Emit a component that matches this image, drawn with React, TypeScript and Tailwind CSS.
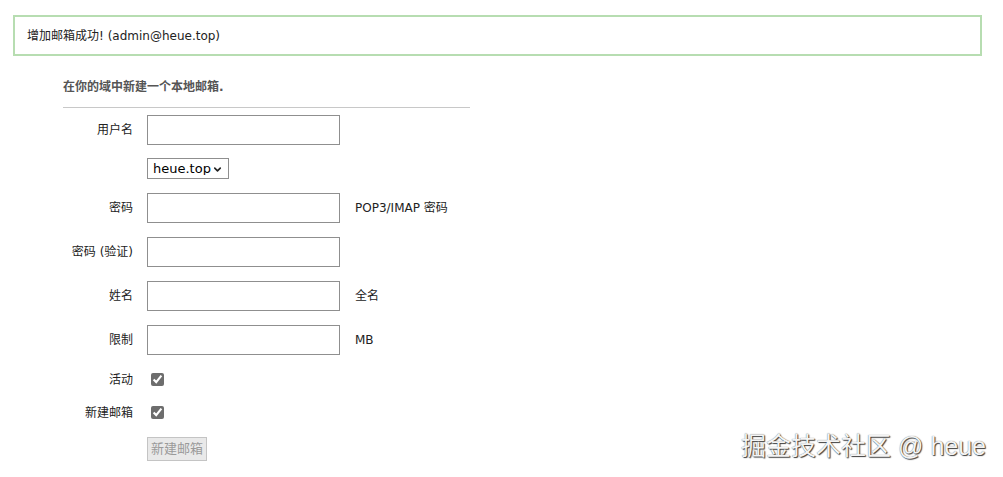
import { ChevronDown } from "lucide-react";

// ─── Form rows ────────────────────────────────────────────────────────────────
type Row = {
  label: string;
  kind: "text" | "select" | "check" | "submit";
  hint?: string;
  mt: string;
};

const ROWS: Row[] = [
  { label: "用户名", kind: "text", mt: "mt-[7px]" },
  { label: "", kind: "select", mt: "mt-[13px]" },
  { label: "密码", kind: "text", hint: "POP3/IMAP 密码", mt: "mt-[14px]" },
  { label: "密码 (验证)", kind: "text", mt: "mt-[14px]" },
  { label: "姓名", kind: "text", hint: "全名", mt: "mt-[14px]" },
  { label: "限制", kind: "text", hint: "MB", mt: "mt-[14px]" },
  { label: "活动", kind: "check", mt: "mt-[18px]" },
  { label: "新建邮箱", kind: "check", mt: "mt-[20px]" },
  { label: "", kind: "submit", mt: "mt-[18px]" },
];

const FONT = "font-['DejaVu_Sans','Noto_Sans_CJK_SC',sans-serif]";

function Control({ row }: { row: Row }) {
  if (row.kind === "text") {
    return (
      <input
        type="text"
        className="h-[30px] w-[193px] border border-[#8f8f8f] bg-white px-1 text-[13px] outline-none"
      />
    );
  }
  if (row.kind === "select") {
    return (
      <div className="relative flex h-[21px] w-[82px] items-center border border-[#8f8f8f] bg-white">
        <select className="h-full w-full appearance-none bg-transparent pl-[5px] text-[13px] leading-none text-black outline-none">
          <option>heue.top</option>
        </select>
        <ChevronDown
          size={11}
          strokeWidth={3.5}
          className="pointer-events-none absolute right-[5px] top-[5px] text-[#222]"
        />
      </div>
    );
  }
  if (row.kind === "check") {
    return (
      <input
        type="checkbox"
        defaultChecked
        className="ml-[4px] h-[13px] w-[13px] accent-[#6d6d6d]"
      />
    );
  }
  return (
    <button
      disabled
      className="h-[24px] w-[60px] border border-[#c4c4c4] bg-[#e9e9e9] text-[13px] text-[#9a9a9a]"
    >
      新建邮箱
    </button>
  );
}

export default function App() {
  return (
    <div className={`relative h-[477px] w-full overflow-hidden bg-white text-[12px] text-[#222] ${FONT}`}>

      {/* ─── Success alert ─── */}
      <div className="ml-[13px] mr-[21px] mt-[15px] flex h-[41px] items-center border-2 border-[#b7ddb1] pl-[12px]">
        增加邮箱成功! (admin@heue.top)
      </div>

      {/* ─── Form ─── */}
      <div className="ml-[63px] mt-[22px] w-[407px]">
        <p className="font-bold text-[#555]">在你的域中新建一个本地邮箱.</p>
        <div className="mt-[11px] h-px bg-[#c8c8c8]" />

        {ROWS.map((row, i) => (
          <div
            key={i}
            className={`flex items-center ${row.mt} ${row.kind === "check" ? "h-[13px]" : ""}`}
          >
            <div className="w-[70px] shrink-0 text-right text-[#222]">{row.label}</div>
            <div className="ml-[14px] flex items-center">
              <Control row={row} />
              {row.hint && <span className="ml-[15px] text-[#222]">{row.hint}</span>}
            </div>
          </div>
        ))}
      </div>

      {/* ─── Watermark ─── */}
      <div className="absolute bottom-[18px] right-[17px] font-['Liberation_Sans','Noto_Sans_CJK_SC',sans-serif] text-[25px] leading-none text-[#f4f4f4] [text-shadow:1px_1px_1px_rgba(0,0,0,0.75),0_0_1px_rgba(0,0,0,0.6)]">
        掘金技术社区 @ heue
      </div>
    </div>
  );
}
